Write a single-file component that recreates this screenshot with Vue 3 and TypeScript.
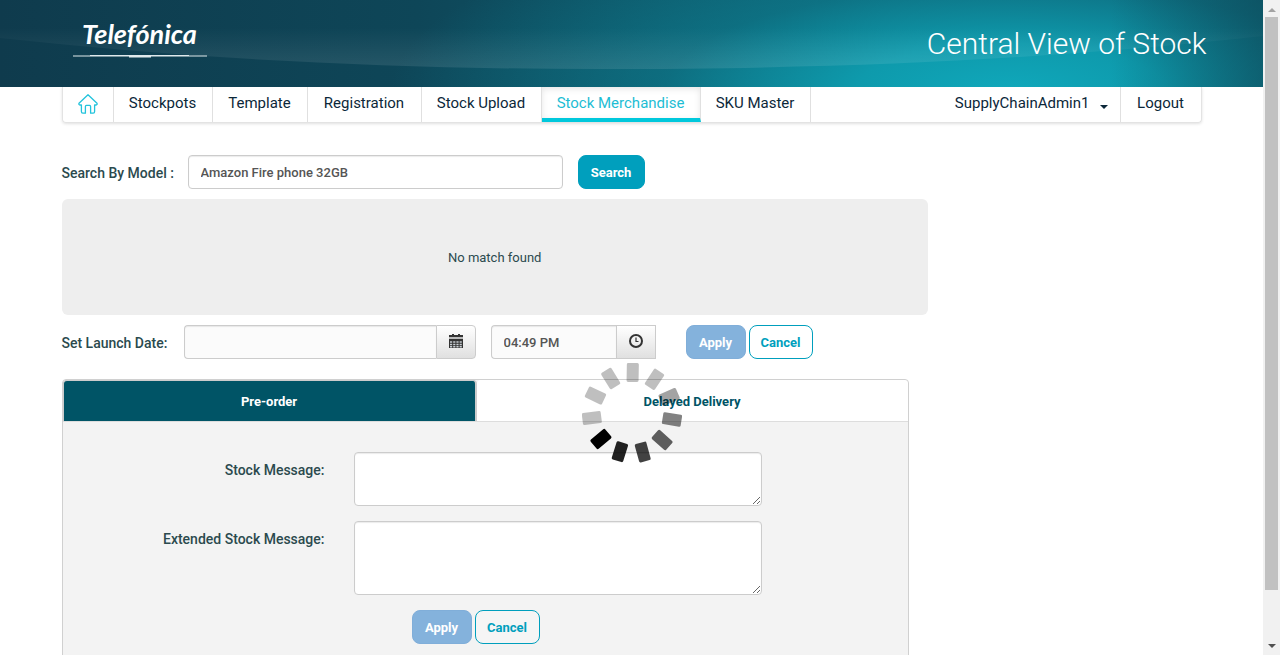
<script setup lang="ts">
import { ref } from 'vue'

interface NavItem {
  label: string
  active?: boolean
}

const navItems: NavItem[] = [
  { label: 'Stockpots' },
  { label: 'Template' },
  { label: 'Registration' },
  { label: 'Stock Upload' },
  { label: 'Stock Merchandise', active: true },
  { label: 'SKU Master' },
]

const model = ref('Amazon Fire phone 32GB')
const launchDate = ref('')
const launchTime = ref('04:49 PM')
const stockMessage = ref('')
const extendedMessage = ref('')
const tab = ref<'pre' | 'delayed'>('pre')

const barOpacity: number[] = [0.25, 0.25, 0.36, 0.49, 0.62, 0.74, 0.87, 1, 0.25, 0.25, 0.25]
</script>

<template>
  <div class="window">
    <div class="page">
      <header class="banner">
        <svg class="swoosh" viewBox="0 0 1263 87" preserveAspectRatio="none" aria-hidden="true">
          <defs>
            <linearGradient id="sheen" x1="0" y1="0" x2="0" y2="1">
              <stop offset="0.4" stop-color="#fff" stop-opacity="0" />
              <stop offset="1" stop-color="#fff" stop-opacity="0.1" />
            </linearGradient>
          </defs>
          <path d="M0 38 C200 60 400 69 600 69 C860 69 1060 58 1263 36 V0 H0 Z" fill="url(#sheen)" />
        </svg>
        <div class="container banner-row">
          <a class="logo" href="#">
            <span class="logo-text">Telefónica</span>
            <svg width="134" height="5" viewBox="0 0 134 5" aria-hidden="true">
              <path d="M0 .5 H17 V0 H116 V.5 H134 V1.6 H78 V2.6 H56 V1.6 H0 Z" fill="#dfe9ec" />
            </svg>
          </a>
          <h1>Central View of Stock</h1>
        </div>
      </header>

      <nav class="container nav">
        <a class="nav-item home" href="#" aria-label="Home">
          <svg width="20" height="20" viewBox="0 0 20 20" fill="none" stroke="#22c3dc" stroke-width="1.3" stroke-linejoin="round" stroke-linecap="round">
            <path d="M10 .8 L19 9.2 Q19.5 10.8 18 11 H16.6 V17.6 Q16.6 19.2 15.2 19.2 H12.6 V12.4 Q12.6 11.4 11.6 11.4 H8.4 Q7.4 11.4 7.4 12.4 V19.2 H4.8 Q3.4 19.2 3.4 17.6 V11 H2 Q.5 10.8 1 9.2 Z" />
          </svg>
        </a>
        <a v-for="item in navItems" :key="item.label" class="nav-item" :class="{ active: item.active }" href="#">{{ item.label }}</a>
        <button class="nav-item user" type="button">SupplyChainAdmin1<span class="caret"></span></button>
        <a class="nav-item logout" href="#">Logout</a>
      </nav>

      <main class="container content">
        <form class="row search-row" @submit.prevent>
          <label for="model">Search By Model :</label>
          <input id="model" v-model="model" class="field model" type="text" />
          <button class="btn primary" type="submit">Search</button>
        </form>

        <div class="result">No match found</div>

        <form class="row" @submit.prevent>
          <label for="date">Set Launch Date:</label>
          <div class="group date">
            <input id="date" v-model="launchDate" class="field" type="text" />
            <button class="addon" type="button" aria-label="Pick date">
              <svg width="14" height="14" viewBox="0 0 14 14" aria-hidden="true">
                <path d="M3 0h2v1h4V0h2v1h3v2H0V1h3z" fill="#333" />
                <path d="M0 3h14v2H0z" fill="#bbb" />
                <path d="M0 5h14v9H0z" fill="#333" />
                <path d="M1 8h12M1 10.5h12M1 12.7h12" stroke="#c8cdd2" stroke-width="1.5" stroke-dasharray="2.2 1" />
              </svg>
            </button>
          </div>
          <div class="group time">
            <input v-model="launchTime" class="field" type="text" aria-label="Launch time" />
            <button class="addon" type="button" aria-label="Pick time">
              <svg width="14" height="14" viewBox="0 0 14 14" fill="none" stroke="#333" aria-hidden="true">
                <circle cx="7" cy="7" r="6" stroke-width="2" />
                <path d="M7 3.5 V7.5 H9.5" stroke-width="1.2" />
              </svg>
            </button>
          </div>
          <div class="actions">
            <button class="btn muted" type="submit">Apply</button>
            <button class="btn outline" type="button">Cancel</button>
          </div>
        </form>

        <section class="panel">
          <div class="tabs" role="tablist">
            <button class="tab" :class="{ selected: tab === 'pre' }" role="tab" type="button" @click="tab = 'pre'">Pre-order</button>
            <button class="tab" :class="{ selected: tab === 'delayed' }" role="tab" type="button" @click="tab = 'delayed'">Delayed Delivery</button>
          </div>
          <form class="message-form" @submit.prevent>
            <label for="stock">Stock Message:</label>
            <textarea id="stock" v-model="stockMessage" class="field short"></textarea>
            <label for="extended">Extended Stock Message:</label>
            <textarea id="extended" v-model="extendedMessage" class="field tall"></textarea>
            <div class="actions form-actions">
              <button class="btn muted" type="submit">Apply</button>
              <button class="btn outline" type="button">Cancel</button>
            </div>
          </form>
        </section>
      </main>

      <svg class="spinner" viewBox="-50 -50 100 100" role="img" aria-label="Loading">
        <rect v-for="(o, i) in barOpacity" :key="i" x="-6" y="-50" width="12" height="19" rx="1.5" :fill-opacity="o" :transform="`rotate(${(i * 360) / 11 + 1})`" />
      </svg>
    </div>

    <div class="scrollbar" aria-hidden="true">
      <span class="arrow up"></span>
      <span class="thumb"></span>
      <span class="arrow down"></span>
    </div>
  </div>
</template>

<style>
body {
  margin: 0;
  overflow: hidden;
}
</style>

<style scoped>
.window {
  display: flex;
  height: 100vh;
  overflow: hidden;
  background: #fff;
  font-family: Roboto, "Liberation Sans", sans-serif;
  font-size: 13px;
  line-height: 20px;
  color: #2b4a4e;
}
.window *,
.window *::before {
  box-sizing: border-box;
}
button,
input,
textarea {
  font: inherit;
  color: inherit;
}
.page {
  position: relative;
  flex: 1;
  min-width: 0;
  overflow: hidden;
}
.container {
  max-width: 1140px;
  margin: 0 auto;
}

.banner {
  position: relative;
  height: 87px;
  background:
    linear-gradient(90deg, rgba(13, 71, 87, 0) 88%, rgba(13, 71, 87, 0.55) 100%),
    radial-gradient(ellipse 620px 190px at 80% 105%, #10a8bb 0%, rgba(14, 160, 178, 0.9) 25%, rgba(13, 128, 146, 0.55) 56%, rgba(14, 84, 102, 0) 100%),
    linear-gradient(90deg, #0f3b4d 0%, #0e4658 33%, #0e5668 52%, #0e6476 70%, #0e6276 88%, #0d4f60 100%);
}
.swoosh {
  position: absolute;
  inset: 0;
  width: 100%;
  height: 100%;
}
.banner-row {
  position: relative;
  display: flex;
  justify-content: space-between;
  align-items: flex-start;
}
.logo {
  display: flex;
  flex-direction: column;
  align-items: center;
  margin: 15px 0 0 11px;
  color: #fff;
  text-decoration: none;
}
.logo svg {
  margin-top: 2px;
}
.logo-text {
  font-family: Lato, sans-serif;
  font-style: italic;
  font-weight: 700;
  font-size: 27px;
  line-height: 38px;
}
h1 {
  margin: 20px -5px 0 0;
  font-size: 30px;
  line-height: 48px;
  font-weight: 300;
  color: #fff;
}

.nav {
  display: grid;
  grid-template-columns: 51px 99px 95px 114px 120px 159px 110px 1fr 80px;
  height: 36px;
  border: 1px solid #e3e3e3;
  border-top: 0;
  border-radius: 0 0 4px 4px;
  box-shadow: 0 1px 3px rgba(0, 0, 0, 0.12);
}
.nav-item {
  display: flex;
  justify-content: center;
  padding: 6px 0 0;
  border: 0;
  border-right: 1px solid #e0e0e0;
  background: none;
  color: #0b2739;
  font-size: 15px;
  line-height: 20px;
  text-decoration: none;
  white-space: nowrap;
}
.home {
  padding-top: 7px;
}
.active {
  color: #1dbdd4;
  border-bottom: 4px solid #00c8dc;
  box-shadow: inset 0 2px 6px rgba(0, 0, 0, 0.1);
}
.user {
  justify-content: flex-end;
  align-items: flex-start;
  padding-right: 12px;
}
.caret {
  margin: 12px 0 0 10px;
  border: 4px solid transparent;
  border-top-color: #0b2739;
  border-bottom: 0;
}
.logout {
  border-right: 0;
}

.content {
  padding-top: 32px;
}
.row {
  display: flex;
  align-items: center;
}
label {
  padding-top: 2px;
  font-size: 14px;
  font-weight: 500;
  white-space: nowrap;
}
.field {
  display: block;
  height: 34px;
  padding: 6px 12px;
  border: 1px solid #ccc;
  border-radius: 4px;
  background: #fff;
  box-shadow: inset 0 1px 1px rgba(0, 0, 0, 0.08);
  color: #555;
  font-weight: 500;
  outline: 0;
}
.search-row label {
  width: 126px;
}
.model {
  width: 375px;
  margin-right: 15px;
}
.btn {
  height: 34px;
  padding: 2px 0 0;
  border: 1px solid #009fbd;
  border-radius: 8px;
  font-weight: 700;
}
.primary {
  width: 67px;
  background: #009fbd;
  color: #fff;
}
.muted {
  width: 60px;
  border-color: #80aed9;
  background: #84b2dc;
  color: #fff;
}
.outline {
  width: 64px;
  background: #fff;
  color: #009fbd;
}
.result {
  display: flex;
  align-items: center;
  justify-content: center;
  width: 76%;
  height: 116px;
  margin: 10px 0;
  padding-top: 2px;
  border-radius: 6px;
  background: #eee;
}
.group {
  display: flex;
}
.group .field {
  flex: 1;
  min-width: 0;
  border-right: 0;
  border-radius: 4px 0 0 4px;
  background: #fbfbfb;
}
.addon {
  display: flex;
  align-items: center;
  justify-content: center;
  width: 40px;
  height: 34px;
  padding: 0 0 2px;
  border: 1px solid #ccc;
  border-radius: 0 4px 4px 0;
  background: linear-gradient(#fff, #e0e0e0);
}
.row label[for="date"] {
  width: 122px;
}
.date {
  width: 292px;
  margin-right: 15px;
}
.time {
  width: 165px;
  margin-right: 30px;
}
.time .addon {
  border-radius: 0;
}
.actions {
  display: flex;
  gap: 3px;
}
.form-actions .outline {
  width: 65px;
  background: #f5f5f5;
}

.panel {
  width: 847px;
  max-width: 100%;
  height: 320px;
  margin-top: 20px;
  border: 1px solid #d0d0d0;
  border-radius: 4px;
  background: #f3f3f3;
}
.tabs {
  display: grid;
  grid-template-columns: 414px 1fr;
  border-bottom: 1px solid #ddd;
}
.tab {
  height: 41px;
  padding: 2px 0 0;
  border: 0;
  border-radius: 4px 4px 0 0;
  background: #fff;
  color: #005466;
  font-weight: 700;
}
.tab.selected {
  border: 1px solid #ccc;
  border-width: 1px 2px 0 1px;
  background: #005466;
  color: #fff;
}
.message-form {
  display: grid;
  grid-template-columns: 262px 408px;
  gap: 15px 29px;
  padding-top: 30px;
}
.message-form label {
  padding-top: 8px;
  text-align: right;
}
.message-form textarea {
  width: 100%;
  resize: vertical;
}
.message-form .short {
  height: 54px;
}
.message-form .tall {
  height: 74px;
}
.form-actions {
  grid-column: 1 / -1;
  padding-left: 349px;
}

.spinner {
  position: absolute;
  left: 50%;
  top: 63%;
  width: 100px;
  height: 100px;
  transform: translate(-50%, -50%);
}

.scrollbar {
  display: flex;
  flex-direction: column;
  align-items: center;
  width: 17px;
  padding: 8px 0 7px;
  box-sizing: border-box;
  background: #f1f1f1;
}
.arrow {
  border: 4px solid transparent;
}
.up {
  border-top: 0;
  border-bottom-color: #a3a3a3;
}
.down {
  margin-top: auto;
  border-bottom: 0;
  border-top-color: #505050;
}
.thumb {
  width: 13px;
  height: 90%;
  max-height: 573px;
  margin-top: 5px;
  background: #c1c1c1;
}
</style>
